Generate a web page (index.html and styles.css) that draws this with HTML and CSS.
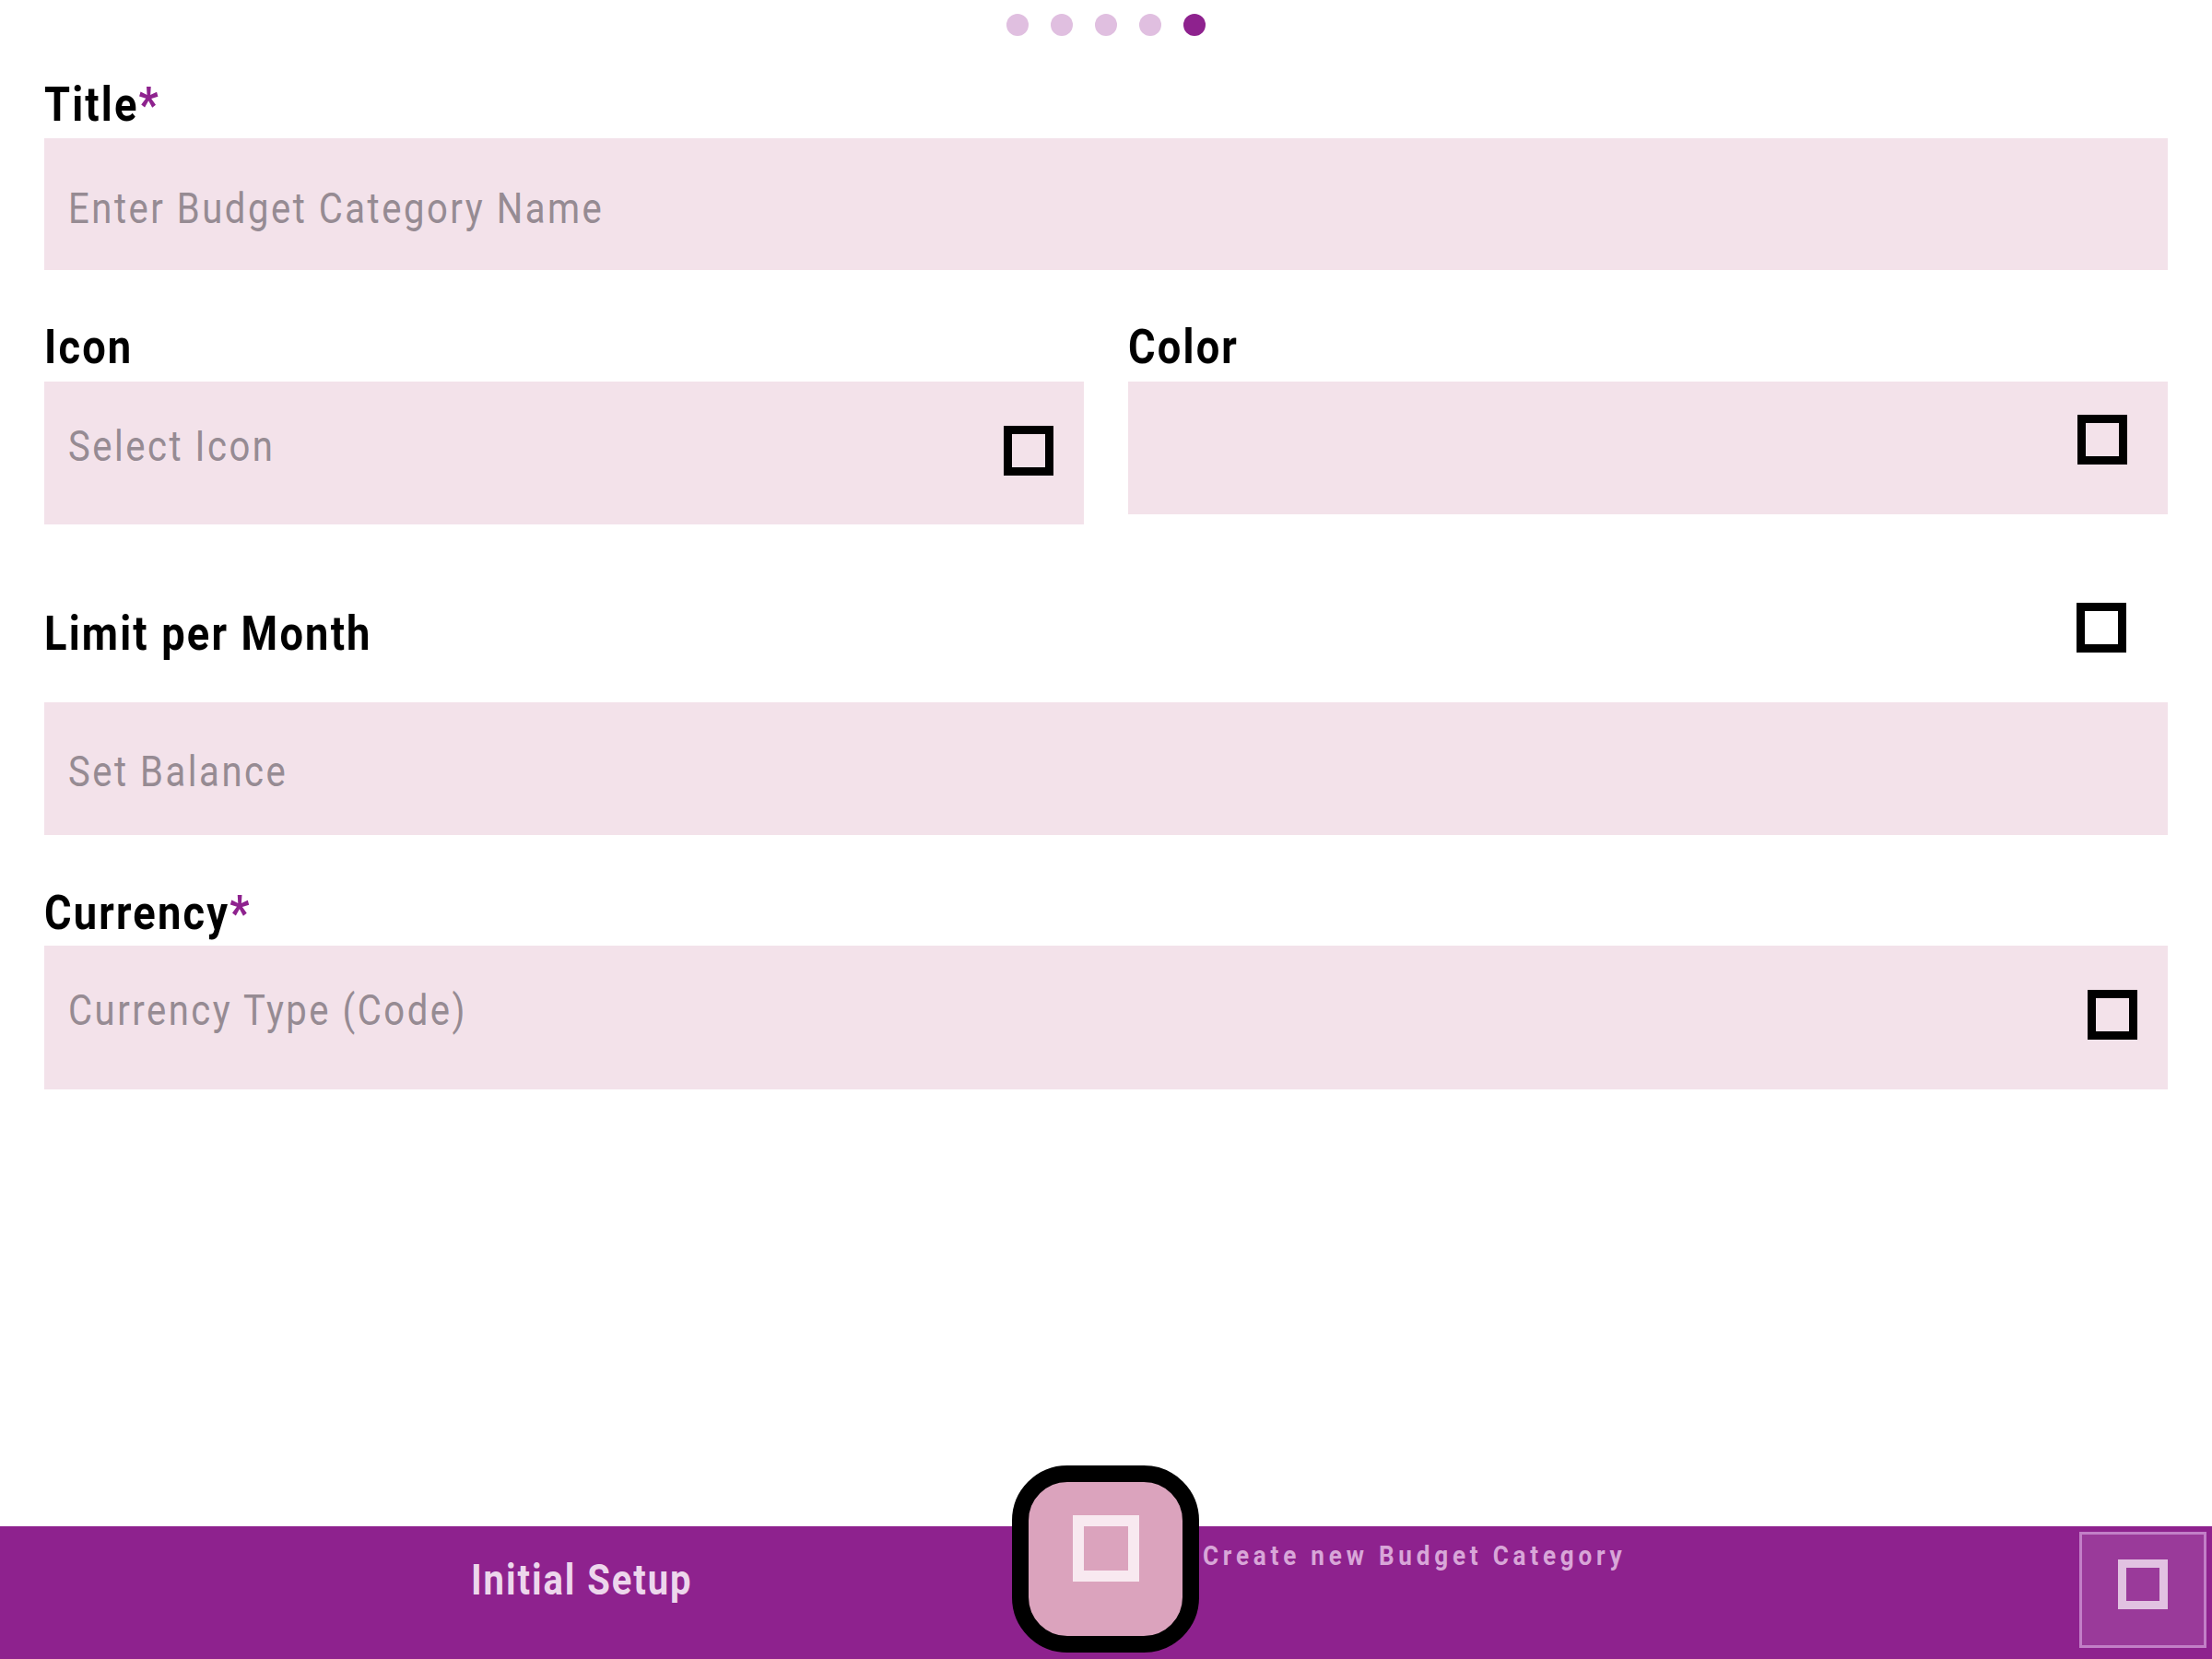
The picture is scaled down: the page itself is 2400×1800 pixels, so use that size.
FILE: index.html
```html
<!DOCTYPE html>
<html lang="en">
<head>
<meta charset="utf-8">
<title>Create new Budget Category</title>
<link rel="stylesheet" href="styles.css">
</head>
<body>
<div class="screen">
  <main class="content">
    <div class="dots">
      <span class="dot"></span>
      <span class="dot"></span>
      <span class="dot"></span>
      <span class="dot"></span>
      <span class="dot dot--active"></span>
    </div>
    <section class="form">
      <label class="label label--title"><span class="cond">Title<span class="req">*</span></span></label>
      <div class="input input--title"><span class="ph cond">Enter Budget Category Name</span></div>

      <div class="pair">
        <div class="col">
          <label class="label label--pair"><span class="cond">Icon</span></label>
          <div class="input input--icon"><span class="ph cond">Select Icon</span><span class="tofu"></span></div>
        </div>
        <div class="col">
          <label class="label label--pair"><span class="cond">Color</span></label>
          <div class="input input--color"><span class="tofu"></span></div>
        </div>
      </div>

      <div class="limit-row">
        <label class="label label--limit"><span class="cond">Limit per Month</span></label>
        <span class="tofu"></span>
      </div>
      <div class="input input--balance"><span class="ph cond">Set Balance</span></div>

      <label class="label label--currency"><span class="cond">Currency<span class="req">*</span></span></label>
      <div class="input input--currency"><span class="ph cond">Currency Type (Code)</span><span class="tofu"></span></div>
    </section>
  </main>

  <footer class="bar">
    <div class="bar-left"><span class="bar-title cond">Initial Setup</span></div>
    <div class="bar-mid"><span class="bar-sub cond">Create new Budget Category</span></div>
    <div class="bar-action"><span class="tofu tofu--light"></span></div>
    <button class="fab" type="button"><span class="tofu tofu--fab"></span></button>
  </footer>
</div>
</body>
</html>
```

FILE: styles.css
```css
html, body {
  margin: 0;
  padding: 0;
}

body {
  width: 2400px;
  height: 1800px;
  overflow: hidden;
  background: #ffffff;
  font-family: Roboto, "Liberation Sans", sans-serif;
  color: #000000;
}

.screen {
  position: relative;
  display: flex;
  flex-direction: column;
  height: 1800px;
}

.content {
  flex: 1;
  padding: 0 48px;
}

.cond {
  display: inline-block;
  transform: scaleX(0.87);
  transform-origin: left center;
  white-space: nowrap;
}

/* page indicator */
.dots {
  display: flex;
  justify-content: center;
  gap: 24px;
  padding-top: 15px;
}

.dot {
  width: 24px;
  height: 24px;
  border-radius: 50%;
  background: #e0bfe0;
}

.dot--active {
  background: #8e228e;
}

/* form */
.form {
  display: flex;
  flex-direction: column;
}

.label {
  display: block;
  height: 52px;
  font-size: 52px;
  line-height: 52px;
  font-weight: 700;
  letter-spacing: 2.5px;
  white-space: nowrap;
}

.req {
  color: #8e228e;
  font-weight: 900;
}

.label--title {
  margin-top: 49px;
  margin-bottom: 10px;
}

.pair {
  display: grid;
  grid-template-columns: 1fr 1fr;
  column-gap: 48px;
  align-items: start;
  margin-top: 58px;
}

.label--pair {
  margin-bottom: 11px;
}

.limit-row {
  display: flex;
  align-items: flex-start;
  justify-content: space-between;
  margin-top: 85px;
  padding-right: 45px;
}

.label--limit {
  margin-top: 8px;
}

.label--currency {
  margin-top: 59px;
  margin-bottom: 9px;
}

.input {
  display: flex;
  align-items: flex-start;
  box-sizing: border-box;
  padding-left: 26px;
  background: #f3e2ea;
}

.ph {
  font-size: 46px;
  line-height: 46px;
  color: #968b93;
  letter-spacing: 2.9px;
}

.tofu {
  flex: none;
  width: 54px;
  height: 54px;
  box-sizing: border-box;
  border: 9px solid #000000;
  margin-left: auto;
}

.input--title {
  height: 143px;
}

.input--title .ph {
  margin-top: 53px;
}

.input--icon {
  height: 155px;
  padding-right: 33px;
}

.input--icon .ph {
  margin-top: 47px;
}

.input--icon .tofu {
  margin-top: 48px;
}

.input--color {
  height: 144px;
  padding-right: 44px;
}

.input--color .tofu {
  margin-top: 36px;
}

.input--balance {
  height: 144px;
  margin-top: 48px;
}

.input--balance .ph {
  margin-top: 52px;
}

.input--currency {
  height: 156px;
  padding-right: 33px;
}

.input--currency .ph {
  margin-top: 47px;
}

.input--currency .tofu {
  margin-top: 48px;
}

/* bottom bar */
.bar {
  position: relative;
  flex: none;
  height: 144px;
  background: #8e228e;
  display: grid;
  grid-template-columns: 1305px 1fr auto;
  align-items: start;
}

.bar-left {
  padding-left: 511px;
  padding-top: 35px;
}

.bar-title {
  font-size: 46px;
  line-height: 46px;
  font-weight: 700;
  letter-spacing: 2.2px;
  color: #edd6ec;
}

.bar-mid {
  padding-top: 17px;
}

.bar-sub {
  font-size: 30px;
  line-height: 30px;
  font-weight: 700;
  letter-spacing: 5.5px;
  color: #d8a6d8;
}

.bar-action {
  width: 138px;
  height: 126px;
  margin: 6px 6px 0 0;
  box-sizing: border-box;
  border: 3px solid #c27fc7;
  background: #9a3a9a;
  display: flex;
  justify-content: center;
  padding-top: 27px;
}

.tofu--light {
  margin-left: 0;
  border-color: #e1c2e1;
}

.fab {
  position: absolute;
  left: 1098px;
  top: -66px;
  width: 203px;
  height: 203px;
  box-sizing: border-box;
  margin: 0;
  padding: 36px 0 0 0;
  border: 18px solid #000000;
  border-radius: 60px;
  background: #dba3bd;
  display: flex;
  justify-content: center;
  align-items: flex-start;
}

.tofu--fab {
  width: 72px;
  height: 72px;
  margin-left: 0;
  border: 12px solid #f8e9f0;
}
```
